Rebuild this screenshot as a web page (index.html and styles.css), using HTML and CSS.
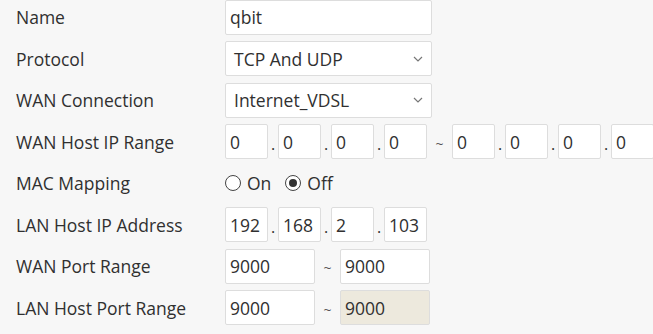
FILE: index.html
```html
<!DOCTYPE html>
<html lang="en">
<head>
    <meta charset="UTF-8">
    <title>Port Forwarding</title>
    <link rel="stylesheet" href="styles.css">
</head>
<body>
    <form class="rule-form">
        <div class="row">
            <label class="label">Name</label>
            <input class="field wide" type="text" value="qbit">
        </div>

        <div class="row">
            <label class="label">Protocol</label>
            <div class="select wide">
                <span>TCP And UDP</span>
                <svg class="caret" width="10" height="6" viewBox="0 0 10 6"><path d="M1 1l4 4 4-4" fill="none" stroke="#777" stroke-width="1.2"/></svg>
            </div>
        </div>

        <div class="row">
            <label class="label">WAN Connection</label>
            <div class="select wide">
                <span>Internet_VDSL</span>
                <svg class="caret" width="10" height="6" viewBox="0 0 10 6"><path d="M1 1l4 4 4-4" fill="none" stroke="#777" stroke-width="1.2"/></svg>
            </div>
        </div>

        <div class="row">
            <label class="label">WAN Host IP Range</label>
            <div class="ip">
                <input class="field octet" value="0"><span class="dot">.</span>
                <input class="field octet" value="0"><span class="dot">.</span>
                <input class="field octet" value="0"><span class="dot">.</span>
                <input class="field octet" value="0">
                <span class="tilde">~</span>
                <input class="field octet" value="0"><span class="dot">.</span>
                <input class="field octet" value="0"><span class="dot">.</span>
                <input class="field octet" value="0"><span class="dot">.</span>
                <input class="field octet" value="0">
            </div>
        </div>

        <div class="row">
            <label class="label">MAC Mapping</label>
            <div class="radios">
                <span class="radio"><span class="circle"></span>On</span>
                <span class="radio"><span class="circle checked"></span>Off</span>
            </div>
        </div>

        <div class="row">
            <label class="label">LAN Host IP Address</label>
            <div class="ip">
                <input class="field octet" value="192"><span class="dot">.</span>
                <input class="field octet" value="168"><span class="dot">.</span>
                <input class="field octet" value="2"><span class="dot">.</span>
                <input class="field octet" value="103">
            </div>
        </div>

        <div class="row">
            <label class="label">WAN Port Range</label>
            <div class="ports">
                <input class="field port" value="9000">
                <span class="tilde">~</span>
                <input class="field port" value="9000">
            </div>
        </div>

        <div class="row">
            <label class="label">LAN Host Port Range</label>
            <div class="ports">
                <input class="field port" value="9000">
                <span class="tilde">~</span>
                <input class="field port" value="9000" disabled>
            </div>
        </div>
    </form>
</body>
</html>
```

FILE: styles.css
```css
/* Page */
body {
    margin: 0;
    background-color: #f7f7f7;
    font-family: "Open Sans", "Noto Sans", sans-serif;
    font-size: 17.5px;
    color: #303030;
    overflow: hidden;
}

.rule-form {
    display: flex;
    flex-direction: column;
    gap: 7.5px;
}

/* Each form row: label column + control */
.row {
    display: flex;
    align-items: center;
    height: 34px;
}

.label {
    width: 209px;
    padding-left: 16px;
    flex-shrink: 0;
}

/* Text boxes */
.field {
    box-sizing: border-box;
    height: 35px;
    margin: 0;
    padding: 0 4px;
    border: 1px solid #ddd;
    border-radius: 2px;
    background-color: #fff;
    font-family: inherit;
    font-size: 17.5px;
    color: #303030;
}

.field:disabled {
    background-color: #ede9dd;
    color: #303030;
}

.wide {
    width: 207px;
}

/* Fake select box */
.select {
    box-sizing: border-box;
    height: 35px;
    display: flex;
    align-items: center;
    justify-content: space-between;
    padding: 0 8px 0 8px;
    border: 1px solid #ddd;
    border-radius: 2px;
    background-color: #fff;
}

/* IP address boxes */
.ip {
    display: flex;
    align-items: center;
    flex-shrink: 0;
}

.octet {
    width: 43px;
    flex-shrink: 0;
}

.dot {
    width: 10px;
    text-align: center;
    padding-top: 4px;
    font-size: 16px;
}

.tilde {
    width: 25px;
    text-align: center;
    font-size: 14px;
    padding-top: 3px;
    color: #555;
}

/* Radios */
.radios {
    display: flex;
    gap: 14px;
}

.radio {
    display: flex;
    align-items: center;
    gap: 6px;
}

.circle {
    box-sizing: border-box;
    width: 16px;
    height: 16px;
    border: 1px solid #444;
    border-radius: 50%;
    background-color: #fff;
    position: relative;
}

.circle.checked::after {
    content: "";
    position: absolute;
    left: 3px;
    top: 3px;
    width: 8px;
    height: 8px;
    border-radius: 50%;
    background-color: #333;
}

/* Port ranges */
.ports {
    display: flex;
    align-items: center;
}

.port {
    width: 90px;
}
```
